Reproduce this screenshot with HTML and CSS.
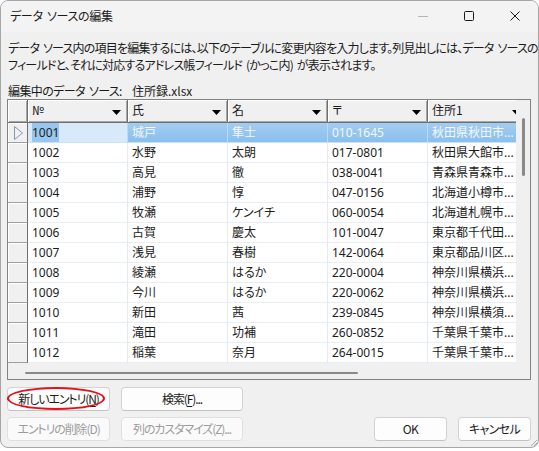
FILE: index.html
```html
<!DOCTYPE html>
<html lang="ja">
<head>
<meta charset="utf-8">
<title>データ ソースの編集</title>
<link rel="stylesheet" href="styles.css">
</head>
<body>
<div class="window">
  <div class="titlebar">
    <div class="title">データ ソースの編集</div>
    <div class="controls">
      <div class="ctl"><svg width="10" height="10" viewBox="0 0 10 10"><path d="M0 5.5H10" stroke="#b4b4b4" stroke-width="1"/></svg></div>
      <div class="ctl"><svg width="10" height="10" viewBox="0 0 10 10"><rect x="0.5" y="0.5" width="9" height="9" rx="1" fill="none" stroke="#1a1a1a" stroke-width="1"/></svg></div>
      <div class="ctl"><svg width="10" height="10" viewBox="0 0 10 10"><path d="M0.5 0.5L9.5 9.5M9.5 0.5L0.5 9.5" stroke="#1a1a1a" stroke-width="1"/></svg></div>
    </div>
  </div>
  <div class="client">
    <p class="desc">データ ソース内の項目を編集するには、以下のテーブルに変更内容を入力します。列見出しには、データ ソースの<br>フィールドと、それに対応するアドレス帳フィールド (かっこ内) が表示されます。</p>
    <div class="source"><span class="source-label">編集中のデータ ソース:</span><span>住所録.xlsx</span></div>

    <div class="grid">
      <div class="grid-body">
        <div class="cells">
          <div class="row head">
            <div class="rh"></div>
            <div class="hc"><span>№</span><svg class="dd" width="9" height="5" viewBox="0 0 9 5"><path d="M0 0H9L4.5 5Z" fill="#000"/></svg></div>
            <div class="hc"><span>氏</span><svg class="dd" width="9" height="5" viewBox="0 0 9 5"><path d="M0 0H9L4.5 5Z" fill="#000"/></svg></div>
            <div class="hc"><span>名</span><svg class="dd" width="9" height="5" viewBox="0 0 9 5"><path d="M0 0H9L4.5 5Z" fill="#000"/></svg></div>
            <div class="hc"><span>〒</span><svg class="dd" width="9" height="5" viewBox="0 0 9 5"><path d="M0 0H9L4.5 5Z" fill="#000"/></svg></div>
            <div class="hc"><span>住所1</span><svg class="dd" width="9" height="5" viewBox="0 0 9 5"><path d="M0 0H9L4.5 5Z" fill="#000"/></svg></div>
          </div>
          <div class="row sel">
            <div class="rh"><svg width="11" height="16" viewBox="0 0 11 16"><path d="M1.5 1.5L9.5 8L1.5 14.5Z" fill="none" stroke="#7f98b8" stroke-width="1"/></svg></div>
            <div class="c cur"><span class="hl">1001</span></div>
            <div class="c">城戸</div>
            <div class="c">隼士</div>
            <div class="c">010-1645</div>
            <div class="c">秋田県秋田市...</div>
          </div>
          <div class="row"><div class="rh"></div><div class="c">1002</div><div class="c">水野</div><div class="c">太朗</div><div class="c">017-0801</div><div class="c">秋田県大館市...</div></div>
          <div class="row"><div class="rh"></div><div class="c">1003</div><div class="c">高見</div><div class="c">徹</div><div class="c">038-0041</div><div class="c">青森県青森市...</div></div>
          <div class="row"><div class="rh"></div><div class="c">1004</div><div class="c">浦野</div><div class="c">惇</div><div class="c">047-0156</div><div class="c">北海道小樽市...</div></div>
          <div class="row"><div class="rh"></div><div class="c">1005</div><div class="c">牧瀬</div><div class="c">ケンイチ</div><div class="c">060-0054</div><div class="c">北海道札幌市...</div></div>
          <div class="row"><div class="rh"></div><div class="c">1006</div><div class="c">古賀</div><div class="c">慶太</div><div class="c">101-0047</div><div class="c">東京都千代田...</div></div>
          <div class="row"><div class="rh"></div><div class="c">1007</div><div class="c">浅見</div><div class="c">春樹</div><div class="c">142-0064</div><div class="c">東京都品川区...</div></div>
          <div class="row"><div class="rh"></div><div class="c">1008</div><div class="c">綾瀬</div><div class="c">はるか</div><div class="c">220-0004</div><div class="c">神奈川県横浜...</div></div>
          <div class="row"><div class="rh"></div><div class="c">1009</div><div class="c">今川</div><div class="c">はるか</div><div class="c">220-0062</div><div class="c">神奈川県横浜...</div></div>
          <div class="row"><div class="rh"></div><div class="c">1010</div><div class="c">新田</div><div class="c">茜</div><div class="c">239-0845</div><div class="c">神奈川県横須...</div></div>
          <div class="row"><div class="rh"></div><div class="c">1011</div><div class="c">滝田</div><div class="c">功補</div><div class="c">260-0852</div><div class="c">千葉県千葉市...</div></div>
          <div class="row"><div class="rh"></div><div class="c">1012</div><div class="c">稲葉</div><div class="c">奈月</div><div class="c">264-0015</div><div class="c">千葉県千葉市...</div></div>
        </div>
        <div class="vscroll"><div class="vthumb"></div></div>
      </div>
      <div class="hscroll"><div class="hthumb"></div></div>
    </div>

    <div class="bottom">
      <div class="btn-grid">
        <button class="btn w1 marked">新しいエントリ(<u>N</u>)<span class="ring"></span></button>
        <button class="btn w2">検索(<u>F</u>)...</button>
        <button class="btn w1" disabled>エントリの削除(D)</button>
        <button class="btn w2" disabled>列のカスタマイズ(Z)...</button>
      </div>
      <div class="actions">
        <button class="btn w3">OK</button>
        <button class="btn w3">キャンセル</button>
      </div>
    </div>
  </div>
  <svg class="grip" width="10" height="10" viewBox="0 0 10 10"><path d="M9 3L3 9M9 6L6 9" stroke="#a8a8a8" stroke-width="1"/></svg>
</div>
</body>
</html>
```

FILE: styles.css
```css
* { box-sizing: border-box; }
html, body { margin: 0; padding: 0; background: #ffffff; }
body {
  width: 539px;
  height: 451px;
  font-family: "Noto Sans CJK JP", sans-serif;
  font-size: 12px;
  color: #1a1a1a;
  font-feature-settings: "palt";
  word-spacing: 2px;
}
.window {
  position: relative;
  width: 539px;
  height: 448px;
  border: 1px solid #a6a6a6;
  border-radius: 8px;
  background: #f0f0f0;
  overflow: hidden;
  display: flex;
  flex-direction: column;
}
.titlebar {
  height: 31px;
  display: flex;
  align-items: center;
  background: #f3f3f3;
  flex: none;
}
.title {
  padding-left: 9px;
  line-height: 16px;
  flex: 1;
  margin-top: -1px;
  letter-spacing: -0.3px;
}
.controls { display: flex; align-self: stretch; }
.ctl {
  width: 46px;
  display: flex;
  align-items: center;
  justify-content: center;
}
.ctl svg { display: block; margin-top: -1px; }

.client {
  padding: 0 7px 0 6px;
  flex: 1;
  display: flex;
  flex-direction: column;
}
.desc {
  margin: 7px 0 0 1px;
  line-height: 17px;
  white-space: nowrap;
  letter-spacing: -0.8px;
}
.source {
  margin: 9px 0 0 1px;
  line-height: 17px;
  display: flex;
}
.source-label { width: 124px; letter-spacing: -0.6px; }

.grid {
  margin-top: 0;
  width: 524px;
  height: 281px;
  border: 1px solid #828282;
  background: #ececec;
  display: flex;
  flex-direction: column;
  font-family: "Noto Sans", "Noto Sans CJK JP", sans-serif;
  word-spacing: 0;
}
.grid-body { display: flex; height: 263px; }
.cells { width: 508px; overflow: hidden; }
.row {
  display: grid;
  grid-template-columns: 20px repeat(5, 100px);
  width: 520px;
  height: 20px;
}
.row.head { height: 23px; }
.rh {
  background: #f0f0f0;
  border-right: 1px solid #6e6e6e;
  border-bottom: 1px solid #a0a0a0;
  box-shadow: inset 1px 1px 0 #ffffff;
  display: flex;
  align-items: center;
  justify-content: center;
}
.rh svg { display: block; margin-left: 2px; }
.hc {
  background: #f0f0f0;
  border-right: 1px solid #6e6e6e;
  border-bottom: 1px solid #6e6e6e;
  box-shadow: inset 1px 1px 0 #ffffff, inset -1px -1px 0 #a8a8a8;
  display: flex;
  align-items: center;
  padding: 0 6px 2px 4px;
  line-height: 16px;
  white-space: nowrap;
  font-family: "Noto Sans CJK JP", sans-serif;
}
.hc .dd { margin-left: auto; margin-top: 5px; flex: none; }
.row.head .rh { border-bottom-color: #6e6e6e; box-shadow: inset 1px 1px 0 #fff, inset -1px -1px 0 #a8a8a8; }
.c {
  background: #ffffff;
  border-right: 1px solid #e4eaf2;
  border-bottom: 1px solid #e9eef5;
  padding: 0 4px;
  line-height: 19px;
  white-space: nowrap;
  overflow: hidden;
  color: #1c1c1c;
}
.row.sel .c {
  background: linear-gradient(#a3cdf1, #8abfed);
  color: #f2f8fe;
  border-right-color: #b9dbf6;
  border-bottom-color: #c9e2f7;
}
.row.sel .c.cur {
  background: #d8eaf9;
  color: #1c1c1c;
}
.hl { background: #98c6ef; padding: 1px 0 2px; }

.vscroll {
  width: 14px;
  background: #f0f0f0;
}
.vthumb {
  margin: 18px 0 0 6px;
  width: 3px;
  height: 58px;
  border-radius: 2px;
  background: #8a8a8a;
}
.hscroll {
  height: 16px;
  background: #f0f0f0;
  padding: 9px 0 0 17px;
}
.hthumb {
  width: 333px;
  height: 2px;
  border-radius: 1px;
  background: #8a8a8a;
}

.bottom {
  margin-top: 7px;
  display: flex;
  align-items: flex-end;
  width: 524px;
}
.btn-grid {
  display: grid;
  grid-template-columns: 103px 122px;
  column-gap: 11px;
  row-gap: 6px;
}
.actions {
  margin-left: auto;
  display: flex;
  gap: 11px;
}
.btn {
  position: relative;
  height: 24px;
  padding: 0;
  font-family: "Noto Sans CJK JP", sans-serif;
  font-feature-settings: "palt";
  font-size: 12px;
  letter-spacing: -1.1px;
  color: #1a1a1a;
  background: #fdfdfd;
  border: 1px solid #d2d2d2;
  border-bottom-color: #c2c2c2;
  border-radius: 4px;
  line-height: 20px;
  white-space: nowrap;
}
.btn.w3 { letter-spacing: -0.6px; }
.btn:disabled {
  color: #9c9c9c;
  background: #fafafa;
  border-color: #e0e0e0;
}
.btn u { text-underline-offset: 2px; }
.w1 { width: 103px; }
.w2 { width: 122px; }
.w3 { width: 73px; }
.ring {
  position: absolute;
  left: -1px;
  top: -1px;
  width: 98px;
  height: 23px;
  border: 2px solid #e3121a;
  border-radius: 50%;
}
.grip {
  position: absolute;
  right: 0;
  bottom: 0;
}
```
